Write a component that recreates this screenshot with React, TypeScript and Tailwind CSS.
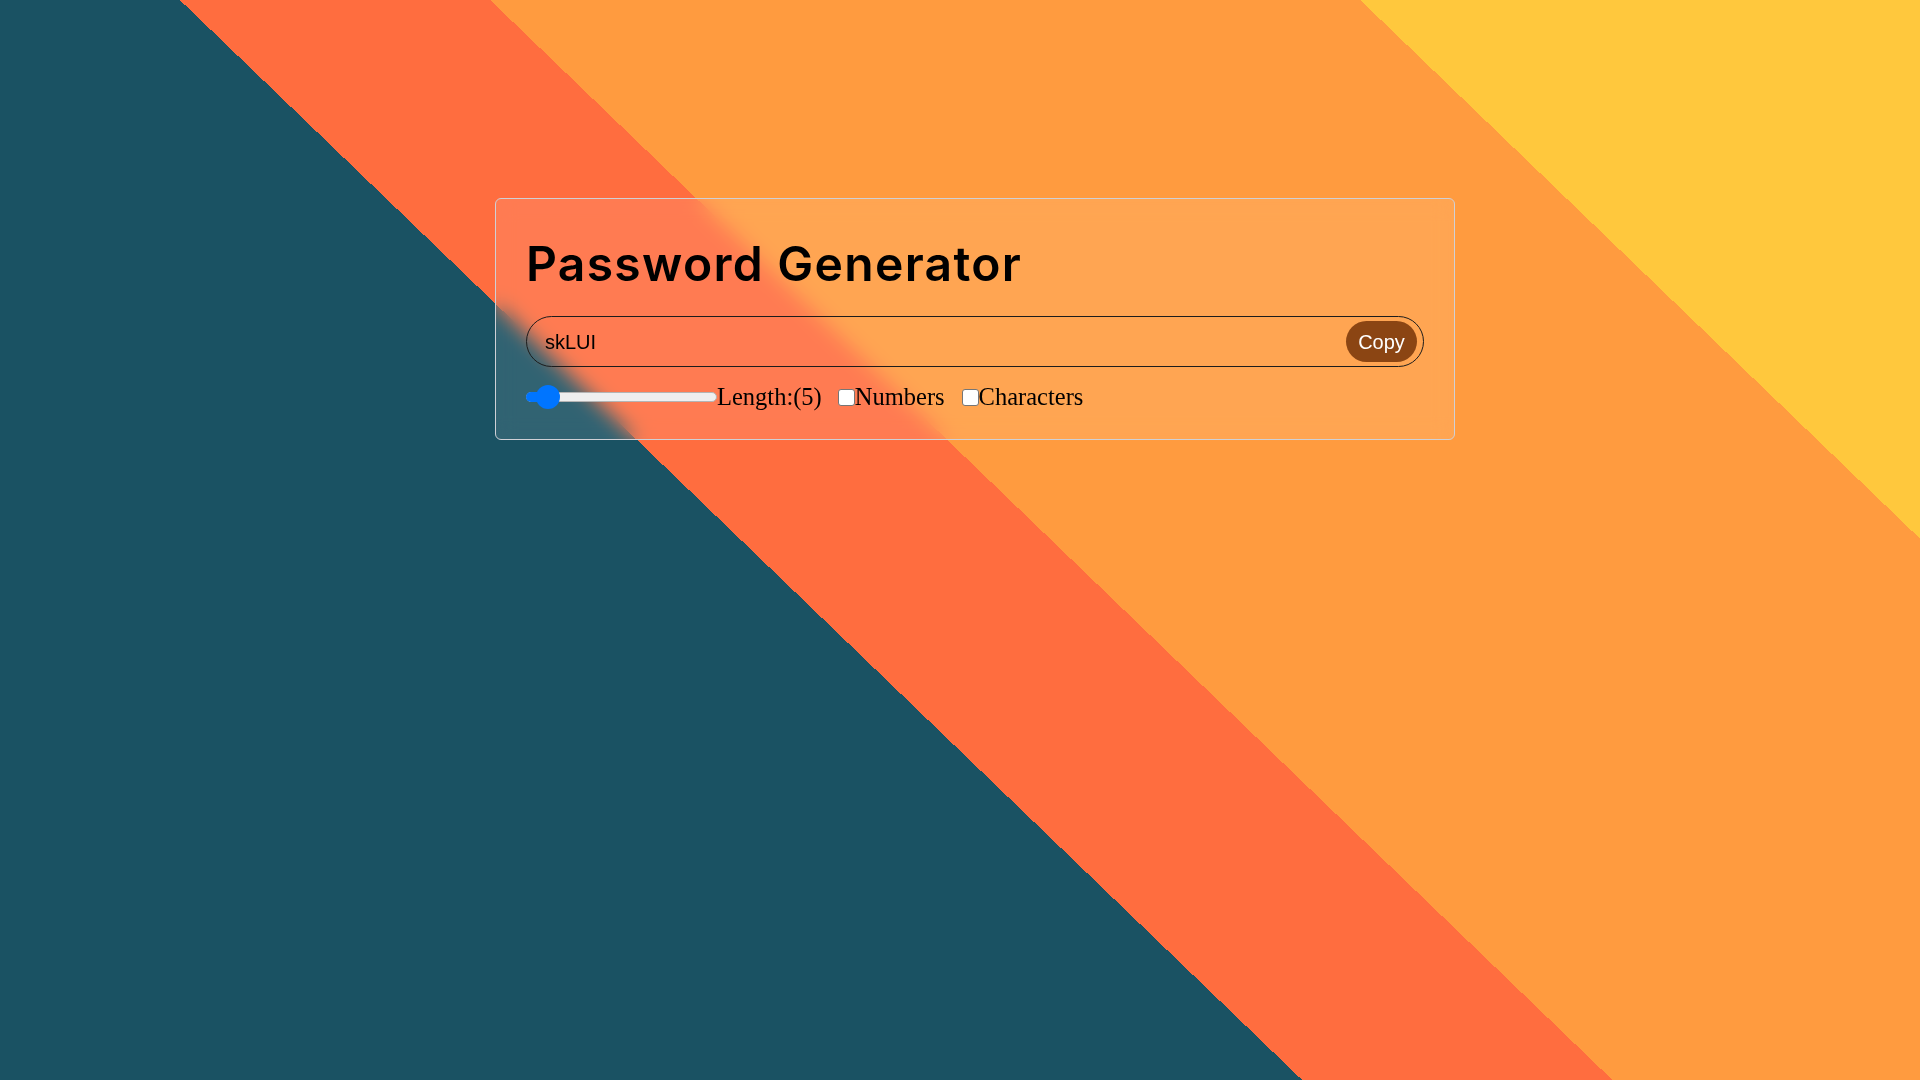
import React from "react";

export default function App() {
  return (
    <div className="min-h-screen w-full overflow-hidden bg-[linear-gradient(43.9deg,#1a5263_42.8%,#ff6d3f_42.8%,#ff6d3f_53%,#ff9b3f_53%,#ff9b3f_81.6%,#ffc83d_81.6%)] pt-[198px]">
      <div className="ml-[495px] w-[960px] rounded-md border border-[#cfd0d6] bg-white/10 px-[30px] pt-[41px] pb-[30px] backdrop-blur-[10px]">
        <h1 className="font-['Inter',sans-serif] text-[48px] font-semibold leading-none tracking-[1.3px] text-black">
          Password Generator
        </h1>
        <div className="mt-[28px] flex h-[51px] items-center rounded-full border border-[#1c1c1c] pl-[18px] pr-[6px]">
          <input
            readOnly
            value="skLUI"
            className="min-w-0 flex-1 bg-transparent font-['Liberation_Sans',Arial,sans-serif] text-[20px] text-black outline-none"
          />
          <button className="h-[41px] w-[71px] rounded-full bg-[#8b4513] font-['Liberation_Sans',Arial,sans-serif] text-[20px] text-white">
            Copy
          </button>
        </div>
        <div className="mt-[18px] flex h-[24px] items-center font-['Liberation_Serif','Times_New_Roman',serif] text-[24.5px] leading-[24px] text-black">
          <div className="relative h-[24px] w-[191px] shrink-0">
            <div className="absolute left-0 top-[7px] h-[10px] w-[191px] rounded-full border border-[#b4b4b4] bg-[#efefef]" />
            <div className="absolute left-0 top-[7px] h-[10px] w-[22px] rounded-l-full bg-[#0075ff]" />
            <div className="absolute left-[10px] top-0 h-[24px] w-[24px] rounded-full bg-[#0075ff]" />
          </div>
          <label>Length:(5)</label>
          <input type="checkbox" className="m-0 ml-[16px] h-[17px] w-[17px] shrink-0 appearance-none rounded-[3px] border-[1.5px] border-[#767676] bg-white" />
          <label>Numbers</label>
          <input type="checkbox" className="m-0 ml-[17px] h-[17px] w-[17px] shrink-0 appearance-none rounded-[3px] border-[1.5px] border-[#767676] bg-white" />
          <label>Characters</label>
        </div>
      </div>
    </div>
  );
}
